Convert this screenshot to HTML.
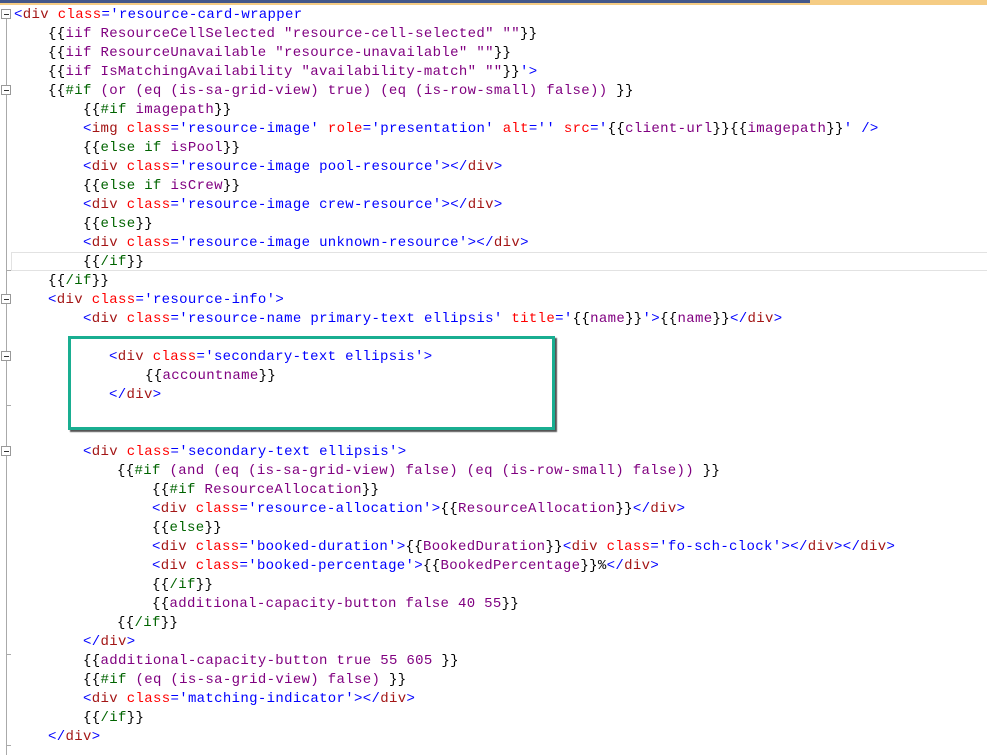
<!DOCTYPE html>
<html><head><meta charset="utf-8"><style>
body{margin:0;width:987px;height:755px;background:#fff;overflow:hidden;position:relative;font-family:"Liberation Mono",monospace;font-size:14px}
.l{position:absolute;white-space:pre;line-height:19px;height:19px;margin-top:2px;letter-spacing:0.34px}
.p{color:#0000ff}.n{color:#a31515}.a{color:#ff0000}.v{color:#0000ff}.h{color:#000000}.k{color:#006400}.i{color:#800080}
.fold{position:absolute;left:1px;width:8px;height:8px;border:1px solid #999;background:#fff}
.fold:after{content:"";position:absolute;left:2px;top:4px;width:5px;height:1px;background:#333}
.tick{position:absolute;left:6px;width:5px;height:1px;background:#aaa}
</style></head><body>
<div style="position:absolute;left:0;top:0;width:987px;height:5px;background:#f5cc84"></div>
<div style="position:absolute;left:0;top:0;width:810px;height:3px;background:#43578a"></div>
<div style="position:absolute;left:6px;top:19px;width:1px;height:736px;background:#aaa"></div>
<div class="fold" style="top:9px"></div>
<div class="fold" style="top:85px"></div>
<div class="fold" style="top:294px"></div>
<div class="fold" style="top:351px"></div>
<div class="fold" style="top:446px"></div>
<div class="tick" style="top:270px"></div>
<div class="tick" style="top:405px"></div>
<div class="tick" style="top:654px"></div>
<div class="tick" style="top:745px"></div>
<div style="position:absolute;left:11px;top:252px;width:976px;height:17px;border:1px solid #e2e2e2;border-right:none"></div>
<div style="position:absolute;left:68px;top:336px;width:481px;height:88px;border:3px solid #19ae91;box-shadow:2px 2px 1px #555"></div>

<div class="l" style="left:14px;top:4px"><span class="p">&lt;</span><span class="n">div</span> <span class="a">class</span><span class="p">=</span><span class="v">'resource-card-wrapper</span></div>
<div class="l" style="left:48px;top:23px"><span class="h">{{</span><span class="i">iif ResourceCellSelected "resource-cell-selected" ""</span><span class="h">}}</span></div>
<div class="l" style="left:48px;top:42px"><span class="h">{{</span><span class="i">iif ResourceUnavailable "resource-unavailable" ""</span><span class="h">}}</span></div>
<div class="l" style="left:48px;top:61px"><span class="h">{{</span><span class="i">iif IsMatchingAvailability "availability-match" ""</span><span class="h">}}</span><span class="v">'</span><span class="p">&gt;</span></div>
<div class="l" style="left:48px;top:80px"><span class="h">{{</span><span class="k">#if</span> <span class="i">(or (eq (is-sa-grid-view) true) (eq (is-row-small) false))</span> <span class="h">}}</span></div>
<div class="l" style="left:83px;top:99px"><span class="h">{{</span><span class="k">#if</span> <span class="i">imagepath</span><span class="h">}}</span></div>
<div class="l" style="left:83px;top:118px"><span class="p">&lt;</span><span class="n">img</span> <span class="a">class</span><span class="p">=</span><span class="v">'resource-image'</span> <span class="a">role</span><span class="p">=</span><span class="v">'presentation'</span> <span class="a">alt</span><span class="p">=</span><span class="v">''</span> <span class="a">src</span><span class="p">=</span><span class="v">'</span><span class="h">{{</span><span class="i">client-url</span><span class="h">}}{{</span><span class="i">imagepath</span><span class="h">}}</span><span class="v">'</span> <span class="p">/&gt;</span></div>
<div class="l" style="left:83px;top:137px"><span class="h">{{</span><span class="k">else if</span> <span class="i">isPool</span><span class="h">}}</span></div>
<div class="l" style="left:83px;top:156px"><span class="p">&lt;</span><span class="n">div</span> <span class="a">class</span><span class="p">=</span><span class="v">'resource-image pool-resource'</span><span class="p">&gt;&lt;/</span><span class="n">div</span><span class="p">&gt;</span></div>
<div class="l" style="left:83px;top:175px"><span class="h">{{</span><span class="k">else if</span> <span class="i">isCrew</span><span class="h">}}</span></div>
<div class="l" style="left:83px;top:194px"><span class="p">&lt;</span><span class="n">div</span> <span class="a">class</span><span class="p">=</span><span class="v">'resource-image crew-resource'</span><span class="p">&gt;&lt;/</span><span class="n">div</span><span class="p">&gt;</span></div>
<div class="l" style="left:83px;top:213px"><span class="h">{{</span><span class="k">else</span><span class="h">}}</span></div>
<div class="l" style="left:83px;top:232px"><span class="p">&lt;</span><span class="n">div</span> <span class="a">class</span><span class="p">=</span><span class="v">'resource-image unknown-resource'</span><span class="p">&gt;&lt;/</span><span class="n">div</span><span class="p">&gt;</span></div>
<div class="l" style="left:83px;top:251px"><span class="h">{{</span><span class="k">/if</span><span class="h">}}</span></div>
<div class="l" style="left:48px;top:270px"><span class="h">{{</span><span class="k">/if</span><span class="h">}}</span></div>
<div class="l" style="left:48px;top:289px"><span class="p">&lt;</span><span class="n">div</span> <span class="a">class</span><span class="p">=</span><span class="v">'resource-info'</span><span class="p">&gt;</span></div>
<div class="l" style="left:83px;top:308px"><span class="p">&lt;</span><span class="n">div</span> <span class="a">class</span><span class="p">=</span><span class="v">'resource-name primary-text ellipsis'</span> <span class="a">title</span><span class="p">=</span><span class="v">'</span><span class="h">{{</span><span class="i">name</span><span class="h">}}</span><span class="v">'</span><span class="p">&gt;</span><span class="h">{{</span><span class="i">name</span><span class="h">}}</span><span class="p">&lt;/</span><span class="n">div</span><span class="p">&gt;</span></div>
<div class="l" style="left:109px;top:346px"><span class="p">&lt;</span><span class="n">div</span> <span class="a">class</span><span class="p">=</span><span class="v">'secondary-text ellipsis'</span><span class="p">&gt;</span></div>
<div class="l" style="left:145px;top:365px"><span class="h">{{</span><span class="i">accountname</span><span class="h">}}</span></div>
<div class="l" style="left:109px;top:384px"><span class="p">&lt;/</span><span class="n">div</span><span class="p">&gt;</span></div>
<div class="l" style="left:83px;top:441px"><span class="p">&lt;</span><span class="n">div</span> <span class="a">class</span><span class="p">=</span><span class="v">'secondary-text ellipsis'</span><span class="p">&gt;</span></div>
<div class="l" style="left:117px;top:460px"><span class="h">{{</span><span class="k">#if</span> <span class="i">(and (eq (is-sa-grid-view) false) (eq (is-row-small) false))</span> <span class="h">}}</span></div>
<div class="l" style="left:152px;top:479px"><span class="h">{{</span><span class="k">#if</span> <span class="i">ResourceAllocation</span><span class="h">}}</span></div>
<div class="l" style="left:152px;top:498px"><span class="p">&lt;</span><span class="n">div</span> <span class="a">class</span><span class="p">=</span><span class="v">'resource-allocation'</span><span class="p">&gt;</span><span class="h">{{</span><span class="i">ResourceAllocation</span><span class="h">}}</span><span class="p">&lt;/</span><span class="n">div</span><span class="p">&gt;</span></div>
<div class="l" style="left:152px;top:517px"><span class="h">{{</span><span class="k">else</span><span class="h">}}</span></div>
<div class="l" style="left:152px;top:536px"><span class="p">&lt;</span><span class="n">div</span> <span class="a">class</span><span class="p">=</span><span class="v">'booked-duration'</span><span class="p">&gt;</span><span class="h">{{</span><span class="i">BookedDuration</span><span class="h">}}</span><span class="p">&lt;</span><span class="n">div</span> <span class="a">class</span><span class="p">=</span><span class="v">'fo-sch-clock'</span><span class="p">&gt;&lt;/</span><span class="n">div</span><span class="p">&gt;&lt;/</span><span class="n">div</span><span class="p">&gt;</span></div>
<div class="l" style="left:152px;top:555px"><span class="p">&lt;</span><span class="n">div</span> <span class="a">class</span><span class="p">=</span><span class="v">'booked-percentage'</span><span class="p">&gt;</span><span class="h">{{</span><span class="i">BookedPercentage</span><span class="h">}}%</span><span class="p">&lt;/</span><span class="n">div</span><span class="p">&gt;</span></div>
<div class="l" style="left:152px;top:574px"><span class="h">{{</span><span class="k">/if</span><span class="h">}}</span></div>
<div class="l" style="left:152px;top:593px"><span class="h">{{</span><span class="i">additional-capacity-button false 40 55</span><span class="h">}}</span></div>
<div class="l" style="left:117px;top:612px"><span class="h">{{</span><span class="k">/if</span><span class="h">}}</span></div>
<div class="l" style="left:83px;top:631px"><span class="p">&lt;/</span><span class="n">div</span><span class="p">&gt;</span></div>
<div class="l" style="left:83px;top:650px"><span class="h">{{</span><span class="i">additional-capacity-button true 55 605</span> <span class="h">}}</span></div>
<div class="l" style="left:83px;top:669px"><span class="h">{{</span><span class="k">#if</span> <span class="i">(eq (is-sa-grid-view) false)</span> <span class="h">}}</span></div>
<div class="l" style="left:83px;top:688px"><span class="p">&lt;</span><span class="n">div</span> <span class="a">class</span><span class="p">=</span><span class="v">'matching-indicator'</span><span class="p">&gt;&lt;/</span><span class="n">div</span><span class="p">&gt;</span></div>
<div class="l" style="left:83px;top:707px"><span class="h">{{</span><span class="k">/if</span><span class="h">}}</span></div>
<div class="l" style="left:48px;top:726px"><span class="p">&lt;/</span><span class="n">div</span><span class="p">&gt;</span></div>
</body></html>
